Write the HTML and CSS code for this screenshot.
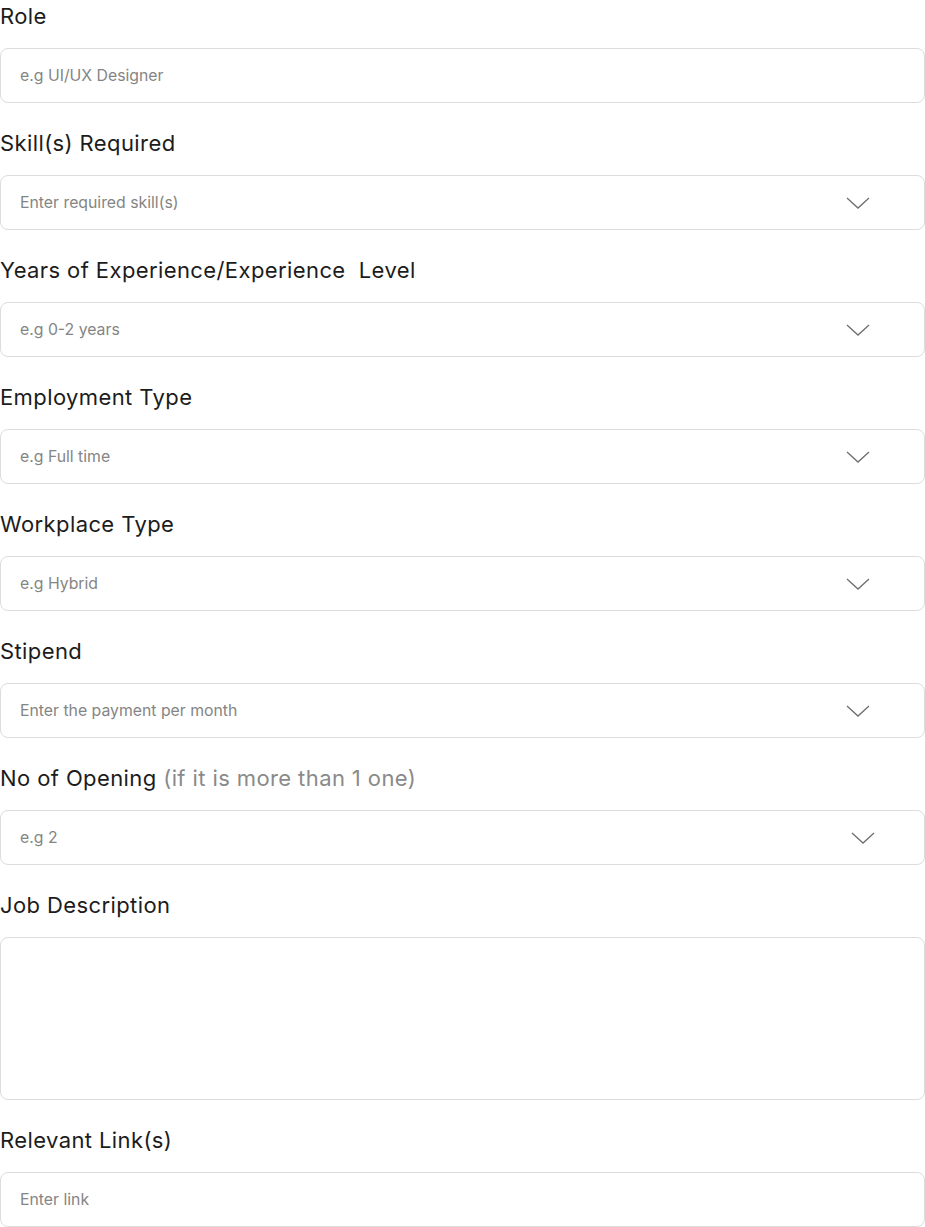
FILE: index.html
```html
<!DOCTYPE html>
<html lang="en">
<head>
<meta charset="utf-8">
<title>Job form</title>
<link rel="stylesheet" href="styles.css">
</head>
<body>
<form class="form">
  <div class="field">
    <label class="label">Role</label>
    <div class="input"><span class="ph">e.g UI/UX Designer</span></div>
  </div>
  <div class="field">
    <label class="label">Skill(s) Required</label>
    <div class="input select"><span class="ph">Enter required skill(s)</span>
      <svg class="chev" viewBox="0 0 24 12" width="24" height="12"><path d="M1 1 L12 11 L23 1" /></svg></div>
  </div>
  <div class="field">
    <label class="label">Years of Experience/Experience&nbsp; Level</label>
    <div class="input select"><span class="ph">e.g 0-2 years</span>
      <svg class="chev" viewBox="0 0 24 12" width="24" height="12"><path d="M1 1 L12 11 L23 1" /></svg></div>
  </div>
  <div class="field">
    <label class="label">Employment Type</label>
    <div class="input select"><span class="ph">e.g Full time</span>
      <svg class="chev" viewBox="0 0 24 12" width="24" height="12"><path d="M1 1 L12 11 L23 1" /></svg></div>
  </div>
  <div class="field">
    <label class="label">Workplace Type</label>
    <div class="input select"><span class="ph">e.g Hybrid</span>
      <svg class="chev" viewBox="0 0 24 12" width="24" height="12"><path d="M1 1 L12 11 L23 1" /></svg></div>
  </div>
  <div class="field">
    <label class="label">Stipend</label>
    <div class="input select"><span class="ph">Enter the payment per month</span>
      <svg class="chev" viewBox="0 0 24 12" width="24" height="12"><path d="M1 1 L12 11 L23 1" /></svg></div>
  </div>
  <div class="field">
    <label class="label">No of Opening <span class="muted">(if it is more than 1 one)</span></label>
    <div class="input select select-wide"><span class="ph">e.g 2</span>
      <svg class="chev" viewBox="0 0 24 12" width="24" height="12"><path d="M1 1 L12 11 L23 1" /></svg></div>
  </div>
  <div class="field">
    <label class="label">Job Description</label>
    <div class="input area"></div>
  </div>
  <div class="field">
    <label class="label">Relevant Link(s)</label>
    <div class="input"><span class="ph">Enter link</span></div>
  </div>
</form>
</body>
</html>
```
FILE: styles.css
```css
html, body {
  margin: 0;
  padding: 0;
  background: #ffffff;
}
.form {
  display: flex;
  flex-direction: column;
  gap: 24px;
  width: 925px;
}
.field {
  display: flex;
  flex-direction: column;
  gap: 16px;
}
.label {
  box-sizing: border-box;
  font-family: "Inter", sans-serif;
  font-size: 22px;
  font-weight: 400;
  line-height: 32px;
  height: 32px;
  color: #1c1c1c;
  letter-spacing: 0.4px;
}
.muted {
  color: #8a8a8a;
}
.input {
  box-sizing: border-box;
  height: 55px;
  border: 1px solid #dcdcdc;
  border-radius: 8px;
  display: flex;
  align-items: center;
  padding: 0 19px 1px;
  justify-content: space-between;
}
.select {
  padding-right: 54px;
}
.select-wide {
  padding-right: 49px;
}
.area {
  height: 163px;
}
.ph {
  font-family: "Inter", sans-serif;
  font-size: 15.8px;
  color: #858585;
}
.chev {
  fill: none;
  stroke: #6e6e6e;
  stroke-width: 1.3;
  margin-top: 2px;
}
```
